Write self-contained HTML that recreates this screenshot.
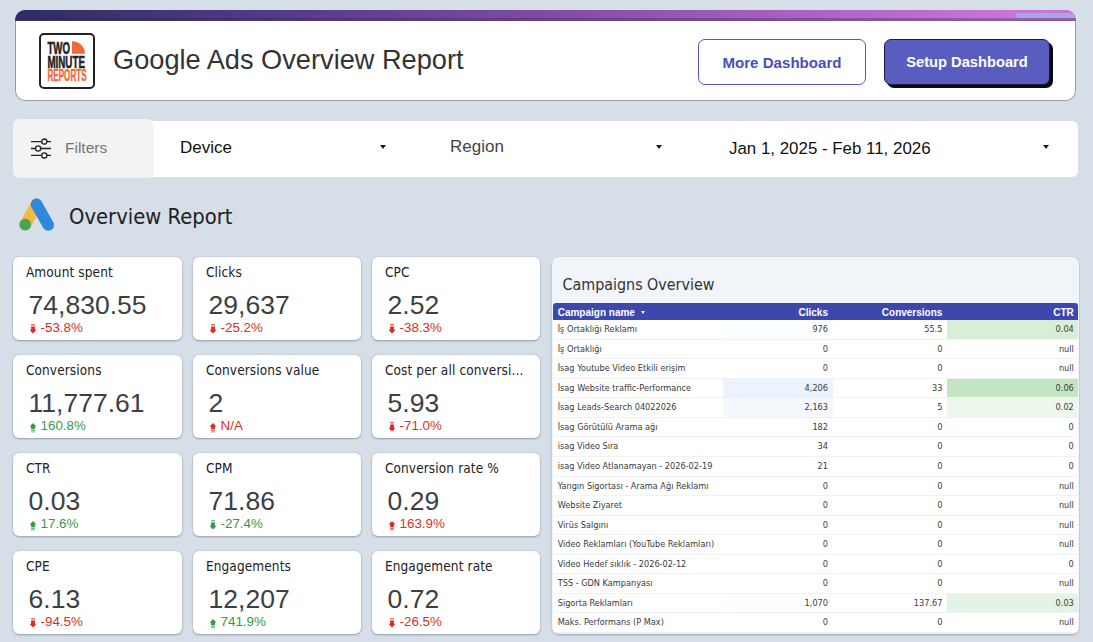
<!DOCTYPE html>
<html lang="en">
<head>
<meta charset="utf-8">
<title>Google Ads Overview Report</title>
<style>
*{box-sizing:border-box;margin:0;padding:0}
html,body{width:1093px;height:642px;overflow:hidden}
body{background:#d6dee7;font-family:"Liberation Sans",sans-serif;position:relative;color:#222}
.abs{position:absolute}
/* header */
#hdr{left:15px;top:10px;width:1061px;height:91px;background:#fff;box-shadow:inset 0 0 0 1px #9a9da3;border-radius:10px;overflow:hidden}
#hdr .bar{left:0;top:0;width:1061px;height:11px;background:linear-gradient(180deg,rgba(0,0,0,0) 0,rgba(0,0,0,0) 7.5px,rgba(40,20,90,.28) 8.5px,rgba(40,20,90,.3) 10.2px,rgba(90,90,90,.75) 11px),linear-gradient(90deg,#2f2d62 0%,#553b86 25%,#804ca1 50%,#ad62c5 75%,#c776d8 94%,#c574d6 100%)}
#hdr .art{left:1001px;top:2.5px;width:59px;height:5px;background:#a9a8dc;border-radius:2px 6px 0 2px}
#logo{left:39px;top:33px;width:56px;height:56px;border:2px solid #222;border-radius:5px;background:#fff}
#title{left:113px;top:41px;font-size:27.2px;line-height:38px;color:#333;white-space:nowrap}
.btn{font-weight:bold;font-size:14.8px;text-align:center;white-space:nowrap}
#b1{left:698px;top:39px;width:168px;height:46px;line-height:45px;border:1px solid #5358bd;border-radius:7px;color:#4a4fb5;background:#fff}
#b2{left:884px;top:39px;width:166px;height:46px;line-height:45px;border:1px solid #1c1c3a;border-radius:7px;color:#fff;background:#5a5dc0;box-shadow:3px 3px 0 #0a0a14}
/* filter bar */
#fbar{left:13px;top:120.5px;width:1065px;height:56.5px;background:#fff;border-radius:6px}
#fbox{left:13px;top:119px;width:141px;height:59px;background:#f3f3f3;border-radius:7px}
#ftxt{left:65px;top:137.6px;font-size:15.5px;line-height:20px;color:#757575}
.ftext{font-size:17px;line-height:20px;color:#111;white-space:nowrap}
.caret{width:0;height:0;border-left:3.7px solid transparent;border-right:3.7px solid transparent;border-top:4.2px solid #1a1a1a}
/* section */
#sect{left:69px;top:200.5px;font-size:21.8px;line-height:32px;color:#222;white-space:nowrap;font-family:"DejaVu Sans Condensed","DejaVu Sans",sans-serif}
/* cards */
.card{width:169px;height:83px;background:#fff;border-radius:6px;box-shadow:0 1px 2px rgba(80,90,110,.45),0 0 1.5px rgba(80,90,110,.3)}
.card .lb{left:12.9px;top:4.5px;font-size:13.5px;letter-spacing:.12px;line-height:20px;color:#222;white-space:nowrap;font-family:"DejaVu Sans Condensed","DejaVu Sans",sans-serif}
.card .vl{left:15.6px;top:32px;font-size:26.5px;line-height:32px;color:#3c4043;white-space:nowrap}
.card .dl{left:27.5px;top:62.7px;font-size:13.4px;line-height:16px;white-space:nowrap}
.card svg{left:17px}
.red{color:#d93025;fill:#d93025}
.grn{color:#389a47;fill:#389a47}
/* table */
#tcard{left:552px;top:257px;width:527px;height:377px;background:#f1f4f8;border-radius:7px;box-shadow:0 1px 2px rgba(80,90,110,.45);overflow:hidden}
#ttitle{left:10.5px;top:14.7px;font-size:15.9px;line-height:26px;color:#333;white-space:nowrap;font-family:"DejaVu Sans Condensed","DejaVu Sans",sans-serif}
#thead{left:1px;top:46.2px;width:525.2px;height:17px;background:#3c48ab;color:#fff;font-weight:bold;font-size:10px;line-height:19.4px;border-radius:3px 3px 0 0}
#rows{left:1px;top:63.2px;width:525.2px}
.r{position:relative;height:19.56px;background:#fff;border-bottom:1px solid #f1f2f5;font-size:9.1px;line-height:18px;color:#3a3a3a;font-family:"DejaVu Sans Condensed","DejaVu Sans",sans-serif}
.r span,#thead span{position:absolute;top:0;white-space:nowrap}
.c1{left:4.7px}
.c2{right:250.2px;text-align:right}
.c3{right:135.8px;text-align:right}
.c4{right:4.4px;text-align:right}
.bg{position:absolute;top:0;height:100%}
</style>
</head>
<body>
<div id="hdr" class="abs"><div class="bar abs"></div><div class="art abs"></div></div>
<div id="logo" class="abs"><svg class="abs" style="left:-2px;top:-2px" width="56" height="56" viewBox="0 0 56 56" font-family="Liberation Sans, sans-serif" font-weight="bold">
<text x="8.4" y="20.8" font-size="17.4" fill="#1e1e1e" stroke="#1e1e1e" stroke-width=".6" textLength="22.6" lengthAdjust="spacingAndGlyphs">TWO</text>
<path d="M33 20.8V8.3A12.6 12.6 0 0 1 46 20.8z" fill="#ee6b3b"/>
<text x="8.4" y="35" font-size="17" fill="#1e1e1e" stroke="#1e1e1e" stroke-width=".6" textLength="37.6" lengthAdjust="spacingAndGlyphs">MINUTE</text>
<text x="8.4" y="47.8" font-size="16" fill="#ee6b3b" stroke="#ee6b3b" stroke-width=".5" textLength="39.2" lengthAdjust="spacingAndGlyphs">REPORTS</text>
</svg></div>
<div id="title" class="abs">Google Ads Overview Report</div>
<div id="b1" class="abs btn" style="font-size:15.1px">More Dashboard</div>
<div id="b2" class="abs btn" style="font-size:14.7px">Setup Dashboard</div>

<div id="fbar" class="abs"></div>
<div id="fbox" class="abs"></div>
<svg class="abs" style="left:30px;top:137px" width="22" height="23" viewBox="0 0 22 23" fill="none" stroke="#222" stroke-width="1.3">
<path d="M1 4.6h10.6M17 4.6h4M1 11.5h4.4M10.8 11.5H21M1 18.4h10.6M17 18.4h4"/>
<circle cx="14.3" cy="4.6" r="2.6"/><circle cx="8.1" cy="11.5" r="2.6"/><circle cx="14.3" cy="18.4" r="2.6"/>
</svg>
<div id="ftxt" class="abs">Filters</div>
<div class="abs ftext" style="left:180px;top:138px">Device</div>
<div class="abs ftext" style="left:450px;top:137px;color:#444">Region</div>
<div class="abs ftext" style="left:729px;top:138.6px;font-size:16.9px">Jan 1, 2025 - Feb 11, 2026</div>
<div class="abs caret" style="left:380.4px;top:145.4px"></div>
<div class="abs caret" style="left:655.7px;top:145.4px"></div>
<div class="abs caret" style="left:1042.6px;top:145.4px"></div>

<svg class="abs" style="left:18px;top:196.8px" width="38" height="36" viewBox="0 0 38 36">
<line x1="18.6" y1="7.3" x2="8" y2="26.5" stroke="#f2b93f" stroke-width="11.6" stroke-linecap="round"/>
<line x1="18.6" y1="7.3" x2="30.2" y2="28" stroke="#3088de" stroke-width="11.6" stroke-linecap="round"/>
<circle cx="7.2" cy="27.6" r="5.9" fill="#4da24e"/>
</svg>
<div id="sect" class="abs">Overview Report</div>

<!--CARDS-->
<div class="abs card" style="left:13px;top:257px;width:169px"><div class="abs lb">Amount spent</div><div class="abs vl">74,830.55</div><svg class="abs red" style="top:67px" width="6" height="10" viewBox="0 0 6 10"><path opacity=".7" d="M1.1 0h3.8v1H1.1z"/><path opacity=".9" d="M1.1 1.6h3.8v1H1.1z"/><path d="M1.1 3.1h3.8v2L6 6.4 3 9.4 0 6.4l1.1-1.3z"/></svg><div class="abs dl red">-53.8%</div></div>
<div class="abs card" style="left:193px;top:257px;width:168.2px"><div class="abs lb">Clicks</div><div class="abs vl">29,637</div><svg class="abs red" style="top:67px" width="6" height="10" viewBox="0 0 6 10"><path opacity=".7" d="M1.1 0h3.8v1H1.1z"/><path opacity=".9" d="M1.1 1.6h3.8v1H1.1z"/><path d="M1.1 3.1h3.8v2L6 6.4 3 9.4 0 6.4l1.1-1.3z"/></svg><div class="abs dl red">-25.2%</div></div>
<div class="abs card" style="left:372px;top:257px;width:168px"><div class="abs lb">CPC</div><div class="abs vl">2.52</div><svg class="abs red" style="top:67px" width="6" height="10" viewBox="0 0 6 10"><path opacity=".7" d="M1.1 0h3.8v1H1.1z"/><path opacity=".9" d="M1.1 1.6h3.8v1H1.1z"/><path d="M1.1 3.1h3.8v2L6 6.4 3 9.4 0 6.4l1.1-1.3z"/></svg><div class="abs dl red">-38.3%</div></div>
<div class="abs card" style="left:13px;top:355px;width:169px"><div class="abs lb">Conversions</div><div class="abs vl">11,777.61</div><svg class="abs grn" style="top:67.8px" width="6" height="10" viewBox="0 0 6 10"><path opacity=".7" d="M1.1 9.4h3.8v-1H1.1z"/><path opacity=".9" d="M1.1 7.8h3.8v-1H1.1z"/><path d="M1.1 6.3h3.8v-2L6 3 3 0 0 3l1.1 1.3z"/></svg><div class="abs dl grn">160.8%</div></div>
<div class="abs card" style="left:193px;top:355px;width:168.2px"><div class="abs lb">Conversions value</div><div class="abs vl">2</div><svg class="abs red" style="top:67.8px" width="6" height="10" viewBox="0 0 6 10"><path opacity=".7" d="M1.1 9.4h3.8v-1H1.1z"/><path opacity=".9" d="M1.1 7.8h3.8v-1H1.1z"/><path d="M1.1 6.3h3.8v-2L6 3 3 0 0 3l1.1 1.3z"/></svg><div class="abs dl red">N/A</div></div>
<div class="abs card" style="left:372px;top:355px;width:168px"><div class="abs lb">Cost per all conversi...</div><div class="abs vl">5.93</div><svg class="abs red" style="top:67px" width="6" height="10" viewBox="0 0 6 10"><path opacity=".7" d="M1.1 0h3.8v1H1.1z"/><path opacity=".9" d="M1.1 1.6h3.8v1H1.1z"/><path d="M1.1 3.1h3.8v2L6 6.4 3 9.4 0 6.4l1.1-1.3z"/></svg><div class="abs dl red">-71.0%</div></div>
<div class="abs card" style="left:13px;top:453px;width:169px"><div class="abs lb">CTR</div><div class="abs vl">0.03</div><svg class="abs grn" style="top:67.8px" width="6" height="10" viewBox="0 0 6 10"><path opacity=".7" d="M1.1 9.4h3.8v-1H1.1z"/><path opacity=".9" d="M1.1 7.8h3.8v-1H1.1z"/><path d="M1.1 6.3h3.8v-2L6 3 3 0 0 3l1.1 1.3z"/></svg><div class="abs dl grn">17.6%</div></div>
<div class="abs card" style="left:193px;top:453px;width:168.2px"><div class="abs lb">CPM</div><div class="abs vl">71.86</div><svg class="abs grn" style="top:67px" width="6" height="10" viewBox="0 0 6 10"><path opacity=".7" d="M1.1 0h3.8v1H1.1z"/><path opacity=".9" d="M1.1 1.6h3.8v1H1.1z"/><path d="M1.1 3.1h3.8v2L6 6.4 3 9.4 0 6.4l1.1-1.3z"/></svg><div class="abs dl grn">-27.4%</div></div>
<div class="abs card" style="left:372px;top:453px;width:168px"><div class="abs lb">Conversion rate %</div><div class="abs vl">0.29</div><svg class="abs red" style="top:67.8px" width="6" height="10" viewBox="0 0 6 10"><path opacity=".7" d="M1.1 9.4h3.8v-1H1.1z"/><path opacity=".9" d="M1.1 7.8h3.8v-1H1.1z"/><path d="M1.1 6.3h3.8v-2L6 3 3 0 0 3l1.1 1.3z"/></svg><div class="abs dl red">163.9%</div></div>
<div class="abs card" style="left:13px;top:551px;width:169px"><div class="abs lb">CPE</div><div class="abs vl">6.13</div><svg class="abs red" style="top:67px" width="6" height="10" viewBox="0 0 6 10"><path opacity=".7" d="M1.1 0h3.8v1H1.1z"/><path opacity=".9" d="M1.1 1.6h3.8v1H1.1z"/><path d="M1.1 3.1h3.8v2L6 6.4 3 9.4 0 6.4l1.1-1.3z"/></svg><div class="abs dl red">-94.5%</div></div>
<div class="abs card" style="left:193px;top:551px;width:168.2px"><div class="abs lb">Engagements</div><div class="abs vl">12,207</div><svg class="abs grn" style="top:67.8px" width="6" height="10" viewBox="0 0 6 10"><path opacity=".7" d="M1.1 9.4h3.8v-1H1.1z"/><path opacity=".9" d="M1.1 7.8h3.8v-1H1.1z"/><path d="M1.1 6.3h3.8v-2L6 3 3 0 0 3l1.1 1.3z"/></svg><div class="abs dl grn">741.9%</div></div>
<div class="abs card" style="left:372px;top:551px;width:168px"><div class="abs lb">Engagement rate</div><div class="abs vl">0.72</div><svg class="abs red" style="top:67px" width="6" height="10" viewBox="0 0 6 10"><path opacity=".7" d="M1.1 0h3.8v1H1.1z"/><path opacity=".9" d="M1.1 1.6h3.8v1H1.1z"/><path d="M1.1 3.1h3.8v2L6 6.4 3 9.4 0 6.4l1.1-1.3z"/></svg><div class="abs dl red">-26.5%</div></div>
<!--/CARDS-->
<div id="tcard" class="abs">
<div id="ttitle" class="abs">Campaigns Overview</div>
<div id="thead" class="abs"><span class="c1">Campaign name<i class="caret" style="display:inline-block;border-top-color:#fff;border-width:3px 2.5px 0;margin-left:5.8px;vertical-align:2.4px"></i></span><span class="c2">Clicks</span><span class="c3">Conversions</span><span class="c4">CTR</span></div>
<div id="rows" class="abs">
<div class="r"><i class="bg" style="left:170.2px;width:109.8px;background:rgba(200,224,248,0.05)"></i><i class="bg" style="left:394px;width:131.2px;background:rgba(140,205,138,0.34)"></i><span class="c1">İş Ortaklığı Reklamı</span><span class="c2">976</span><span class="c3">55.5</span><span class="c4">0.04</span></div>
<div class="r"><span class="c1">İş Ortaklığı</span><span class="c2">0</span><span class="c3">0</span><span class="c4">null</span></div>
<div class="r"><span class="c1">İsag Youtube Video Etkili erişim</span><span class="c2">0</span><span class="c3">0</span><span class="c4">null</span></div>
<div class="r"><i class="bg" style="left:170.2px;width:109.8px;background:rgba(200,224,248,0.36)"></i><i class="bg" style="left:394px;width:131.2px;background:rgba(140,205,138,0.52)"></i><span class="c1">İsag Website traffic-Performance</span><span class="c2">4,206</span><span class="c3">33</span><span class="c4">0.06</span></div>
<div class="r"><i class="bg" style="left:170.2px;width:109.8px;background:rgba(200,224,248,0.18)"></i><i class="bg" style="left:394px;width:131.2px;background:rgba(140,205,138,0.16)"></i><span class="c1">İsag Leads-Search 04022026</span><span class="c2">2,163</span><span class="c3">5</span><span class="c4">0.02</span></div>
<div class="r"><span class="c1">İsag Görütülü Arama ağı</span><span class="c2">182</span><span class="c3">0</span><span class="c4">0</span></div>
<div class="r"><span class="c1">isag Video Sıra</span><span class="c2">34</span><span class="c3">0</span><span class="c4">0</span></div>
<div class="r"><span class="c1">isag Video Atlanamayan - 2026-02-19</span><span class="c2">21</span><span class="c3">0</span><span class="c4">0</span></div>
<div class="r"><span class="c1">Yangın Sigortası - Arama Ağı Reklamı</span><span class="c2">0</span><span class="c3">0</span><span class="c4">null</span></div>
<div class="r"><span class="c1">Website Ziyaret</span><span class="c2">0</span><span class="c3">0</span><span class="c4">null</span></div>
<div class="r"><span class="c1">Virüs Salgını</span><span class="c2">0</span><span class="c3">0</span><span class="c4">null</span></div>
<div class="r"><span class="c1">Video Reklamları (YouTube Reklamları)</span><span class="c2">0</span><span class="c3">0</span><span class="c4">null</span></div>
<div class="r"><span class="c1">Video Hedef sıklık - 2026-02-12</span><span class="c2">0</span><span class="c3">0</span><span class="c4">0</span></div>
<div class="r"><span class="c1">TSS - GDN Kampanyası</span><span class="c2">0</span><span class="c3">0</span><span class="c4">null</span></div>
<div class="r"><i class="bg" style="left:170.2px;width:109.8px;background:rgba(200,224,248,0.04)"></i><i class="bg" style="left:394px;width:131.2px;background:rgba(140,205,138,0.23)"></i><span class="c1">Sigorta Reklamları</span><span class="c2">1,070</span><span class="c3">137.67</span><span class="c4">0.03</span></div>
<div class="r"><span class="c1">Maks. Performans (P Max)</span><span class="c2">0</span><span class="c3">0</span><span class="c4">null</span></div>
</div>
</div>
</body>
</html>
